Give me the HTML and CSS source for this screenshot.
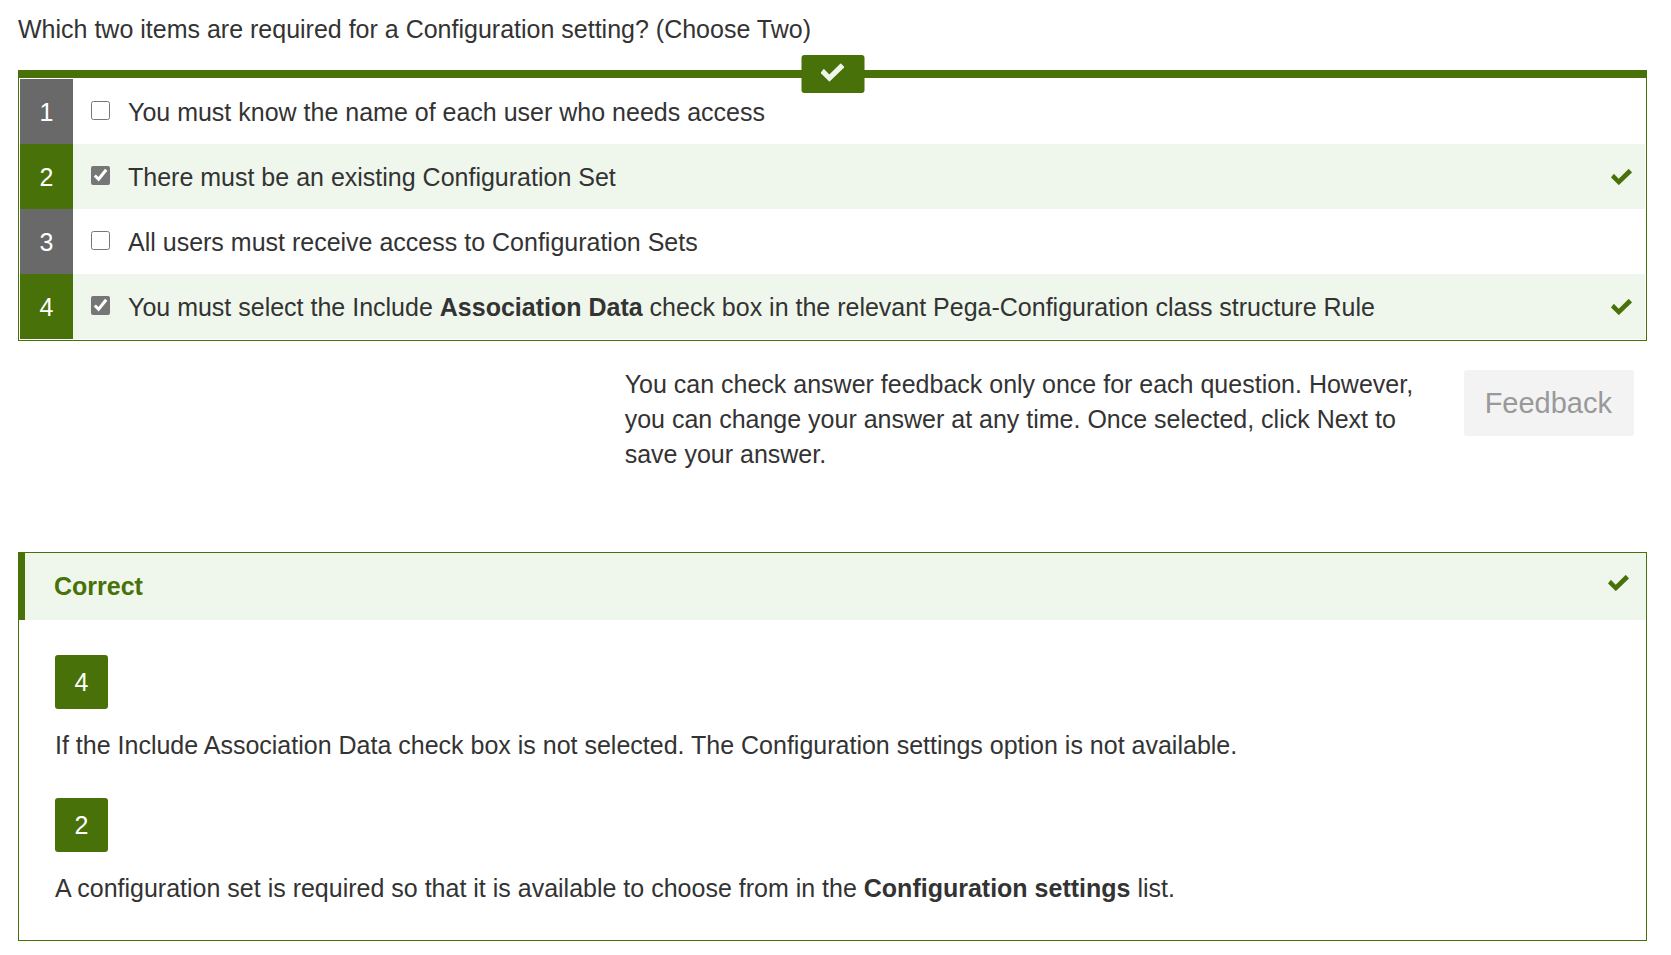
FILE: index.html
```
<!DOCTYPE html>
<html lang="en">
<head>
<meta charset="utf-8">
<meta name="viewport" content="width=device-width, initial-scale=1">
<title>Configuration setting question</title>
<link rel="stylesheet" href="styles.css">
</head>
<body>
<svg class="sprite" aria-hidden="true">
  <symbol id="check" viewBox="0 0 21 16">
    <path d="M3.3 5.2 7.7 9.7 17.3.3Q17.7-.1 18.1.3L20.7 2.9Q21.1 3.3 20.7 3.7L8.2 15.7Q7.8 16.1 7.4 15.7L.3 8.7Q-.1 8.3.3 7.9L2.5 5.2Q2.9 4.8 3.3 5.2Z"/>
  </symbol>
</svg>
<main class="page">
  <p class="question" id="question">Which two items are required for a Configuration setting? (Choose Two)</p>

  <div class="answers" role="group" aria-labelledby="question">
    <div class="result"><svg class="check check-large" role="img" aria-label="Correct"><use href="#check"/></svg></div>
    <div class="answer">
      <span class="number">1</span>
      <input class="box" type="checkbox" id="a1">
      <label class="text" for="a1">You must know the name of each user who needs access</label>
    </div>
    <div class="answer correct">
      <span class="number">2</span>
      <input class="box" type="checkbox" id="a2" checked>
      <label class="text" for="a2">There must be an existing Configuration Set</label>
      <svg class="check" role="img" aria-label="Correct"><use href="#check"/></svg>
    </div>
    <div class="answer">
      <span class="number">3</span>
      <input class="box" type="checkbox" id="a3">
      <label class="text" for="a3">All users must receive access to Configuration Sets</label>
    </div>
    <div class="answer correct">
      <span class="number">4</span>
      <input class="box" type="checkbox" id="a4" checked>
      <label class="text" for="a4">You must select the Include <strong>Association Data</strong> check box in the relevant Pega-Configuration class structure Rule</label>
      <svg class="check" role="img" aria-label="Correct"><use href="#check"/></svg>
    </div>
  </div>

  <div class="actions">
    <p class="hint">You can check answer feedback only once for each question. However, you can change your answer at any time. Once selected, click Next to save your answer.</p>
    <button class="feedback-button" type="button" disabled>Feedback</button>
  </div>

  <section class="feedback">
    <header class="feedback-header">
      <h2 class="feedback-title">Correct</h2>
      <svg class="check" aria-hidden="true"><use href="#check"/></svg>
    </header>
    <div class="feedback-body">
      <div class="note">
        <span class="tag">4</span>
        <p class="note-text">If the Include Association Data check box is not selected. The Configuration settings option is not available.</p>
      </div>
      <div class="note">
        <span class="tag">2</span>
        <p class="note-text">A configuration set is required so that it is available to choose from in the <strong>Configuration settings</strong> list.</p>
      </div>
    </div>
  </section>
</main>
</body>
</html>
```
FILE: styles.css
```
:root {
  --green: #487109;
  --pale: #eff7ec;
  --gray: #696969;
}

* {
  box-sizing: border-box;
}

body {
  margin: 0;
  background: #fff;
  color: #333;
  font-family: "Liberation Sans", Arial, sans-serif;
  font-size: 25px;
  line-height: 35px;
}

p,
h2 {
  margin: 0;
}

.sprite {
  display: none;
}

.page {
  padding: 12px 24px 14px 18px;
}

.question {
  margin-bottom: 23px;
}

.check {
  flex: none;
  width: 21px;
  height: 16px;
  fill: var(--green);
}

.check-large {
  width: 24px;
  height: 19px;
  fill: var(--pale);
}

.answers {
  position: relative;
  padding: 1px;
  border: 1px solid var(--green);
  border-top-width: 8px;
}

/* Badge centred over the top edge of the answer list */
.result {
  position: absolute;
  top: -23px;
  left: 50%;
  display: flex;
  justify-content: center;
  width: 63px;
  height: 38px;
  padding-top: 8px;
  border-radius: 3px;
  background: var(--green);
  transform: translateX(-50%);
}

.answer {
  display: flex;
  align-items: center;
  min-height: 65px;
  padding-right: 13px;
}

.answer.correct {
  background: var(--pale);
}

.number {
  flex: none;
  align-self: stretch;
  width: 53px;
  padding: 16px 0 14px;
  background: var(--gray);
  color: #fff;
  text-align: center;
}

.correct .number {
  background: var(--green);
}

.box {
  flex: none;
  width: 19px;
  height: 19px;
  margin: 0 18px 2px;
  accent-color: #767676;
}

.text {
  flex: 1;
  padding: 16px 0 14px;
}

.actions {
  display: flex;
  justify-content: flex-end;
  align-items: flex-start;
  gap: 41px;
  padding: 26px 13px 80px 0;
}

.hint {
  flex: 0 1 798px;
}

.feedback-button {
  flex: none;
  margin-top: 3px;
  padding: 16px 22px 15px 21px;
  border: 0;
  border-radius: 3px;
  background: #f3f3f3;
  color: #999;
  font: inherit;
  font-size: 29px;
  line-height: 35px;
}

.feedback {
  border: 1px solid var(--green);
}

.feedback-header {
  display: flex;
  align-items: center;
  justify-content: space-between;
  padding: 16px 17px 16px 29px;
  border-left: 6px solid var(--green);
  background: var(--pale);
}

.feedback-header .check {
  margin-bottom: 7px;
}

.feedback-title {
  color: var(--green);
  font-size: 25px;
}

.feedback-body {
  display: grid;
  gap: 35px;
  padding: 35px 36px 34px;
}

.note {
  display: grid;
  gap: 19px;
}

.tag {
  width: 53px;
  padding: 10px 0 9px;
  border-radius: 3px;
  background: var(--green);
  color: #fff;
  text-align: center;
}
```
